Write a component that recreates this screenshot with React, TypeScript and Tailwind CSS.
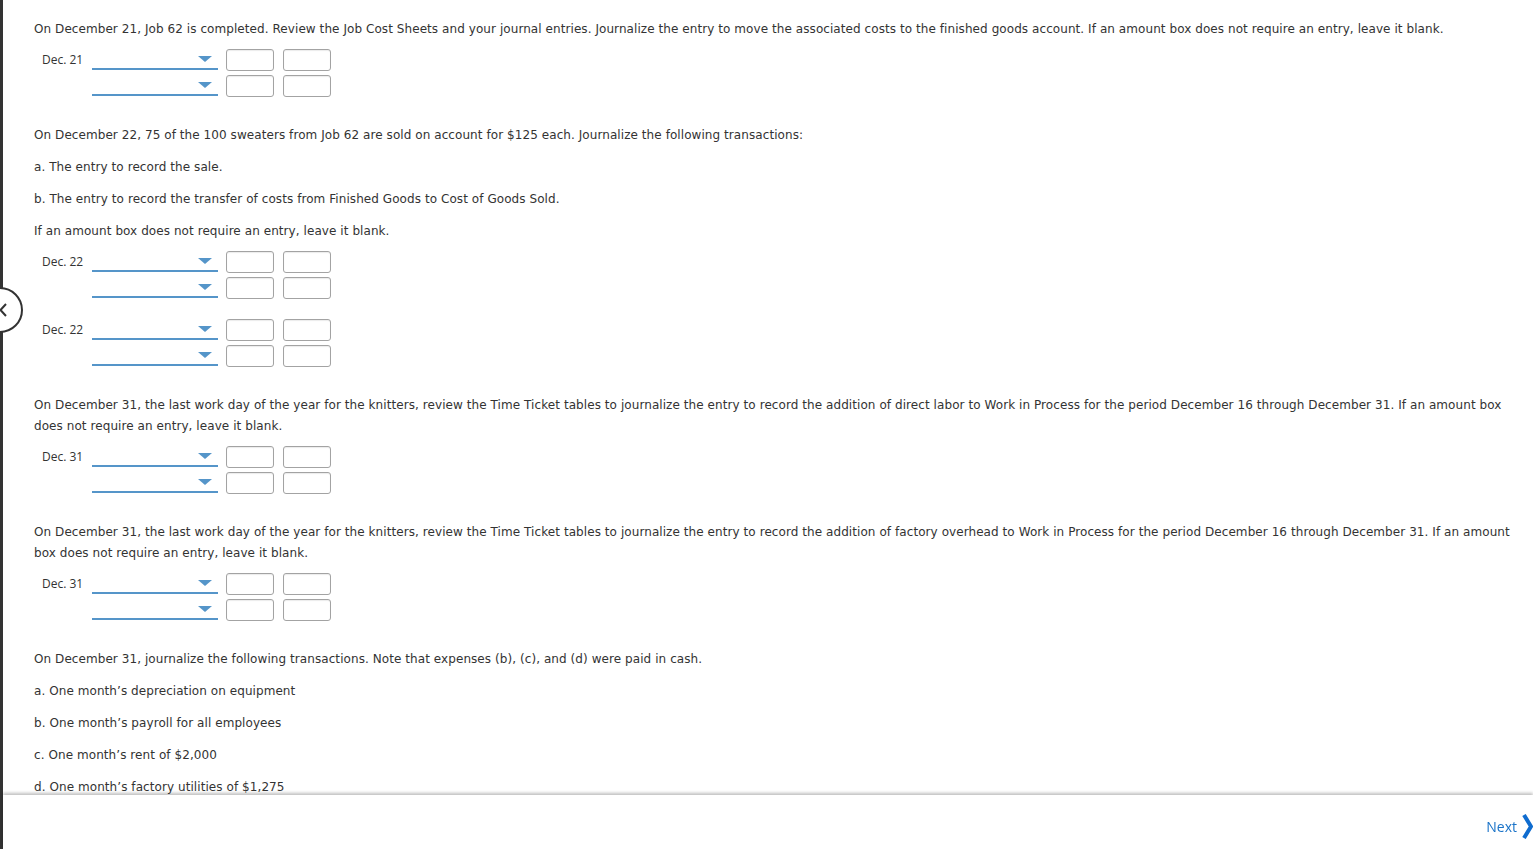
import React from 'react'

const body = { fontFamily: '"DejaVu Sans", Verdana, sans-serif' }
const label = { fontFamily: '"Open Sans", "Segoe UI", sans-serif' }

const Amount = () => (
  <div className="h-[22px] w-[48px] rounded-[3px] border border-[#a3a3a3] bg-white shadow-[inset_0_1px_1px_rgba(0,0,0,0.08)]" />
)

const Row = ({ date }: { date?: string }) => (
  <div className="flex h-[22px] items-center">
    <div className="w-[58px] pl-[8px] text-[12px] text-[#333]" style={label}>
      {date}
    </div>
    <div className="relative h-[22px] w-[126px]">
      <div className="absolute bottom-[1px] left-0 right-0 h-[2px] bg-[#5595c9]" />
      <div className="absolute right-[6px] top-[7px] h-0 w-0 border-x-[7px] border-t-[6px] border-x-transparent border-t-[#5595c9]" />
    </div>
    <div className="ml-[8px] flex gap-[9px]">
      <Amount />
      <Amount />
    </div>
  </div>
)

const Entry = ({ date }: { date: string }) => (
  <div className="flex flex-col gap-[4px]">
    <Row date={date} />
    <Row />
  </div>
)

const P = ({ children, className = '' }: { children: React.ReactNode; className?: string }) => (
  <p className={`text-[12px] leading-[21px] tracking-[0.07px] text-[#333] ${className}`}>{children}</p>
)

export default function App() {
  return (
    <div className="relative min-h-[849px] bg-white" style={body}>
      <div className="fixed left-0 top-0 h-full w-[3px] bg-[#333]" />
      <div className="fixed left-[-23px] top-[287px] h-[46px] w-[46px] rounded-full border-[2.5px] border-[#333] bg-white" />
      <svg width="8" height="14" viewBox="0 0 8 14" className="fixed left-0 top-[303px]">
        <polyline points="6,1 0.5,7 6,13" fill="none" stroke="#333" strokeWidth="2" />
      </svg>

      <div className="pl-[34px] pr-[20px] pt-[19px] pb-[80px]">
        <P>
          On December 21, Job 62 is completed. Review the Job Cost Sheets and your journal entries. Journalize the entry to move the associated costs to the finished goods account. If an amount box does not require an entry, leave it blank.
        </P>
        <div className="mt-[9px]">
          <Entry date="Dec. 21" />
        </div>

        <div className="mt-[27.5px] flex flex-col gap-[11px]">
          <P>On December 22, 75 of the 100 sweaters from Job 62 are sold on account for $125 each. Journalize the following transactions:</P>
          <P>a. The entry to record the sale.</P>
          <P>b. The entry to record the transfer of costs from Finished Goods to Cost of Goods Sold.</P>
          <P>If an amount box does not require an entry, leave it blank.</P>
        </div>
        <div className="mt-[9px] flex flex-col gap-[20px]">
          <Entry date="Dec. 22" />
          <Entry date="Dec. 22" />
        </div>

        <div className="mt-[28.5px]">
          <P>
            On December 31, the last work day of the year for the knitters, review the Time Ticket tables to journalize the entry to record the addition of direct labor to Work in Process for the period December 16 through December 31. If an amount box does not require an entry, leave it blank.
          </P>
        </div>
        <div className="mt-[9px]">
          <Entry date="Dec. 31" />
        </div>

        <div className="mt-[27.5px]">
          <P>
            On December 31, the last work day of the year for the knitters, review the Time Ticket tables to journalize the entry to record the addition of factory overhead to Work in Process for the period December 16 through December 31. If an amount box does not require an entry, leave it blank.
          </P>
        </div>
        <div className="mt-[9px]">
          <Entry date="Dec. 31" />
        </div>

        <div className="mt-[28.5px] flex flex-col gap-[11px]">
          <P>On December 31, journalize the following transactions. Note that expenses (b), (c), and (d) were paid in cash.</P>
          <P>a. One month’s depreciation on equipment</P>
          <P>b. One month’s payroll for all employees</P>
          <P>c. One month’s rent of $2,000</P>
          <P>d. One month’s factory utilities of $1,275</P>
        </div>
      </div>

      <div className="fixed bottom-0 left-[3px] right-0 h-[54px] bg-white shadow-[0_-2px_3px_rgba(0,0,0,0.25)]">
        <div className="flex h-full items-center justify-end gap-[5px] pt-[8px]">
          <span className="text-[14px] text-[#1a73c8]" style={label}>
            Next
          </span>
          <svg width="11" height="25" viewBox="0 0 11 25">
            <polyline points="2,1 9,12.5 2,24" fill="none" stroke="#0f6ccf" strokeWidth="4" />
          </svg>
        </div>
      </div>
    </div>
  )
}
